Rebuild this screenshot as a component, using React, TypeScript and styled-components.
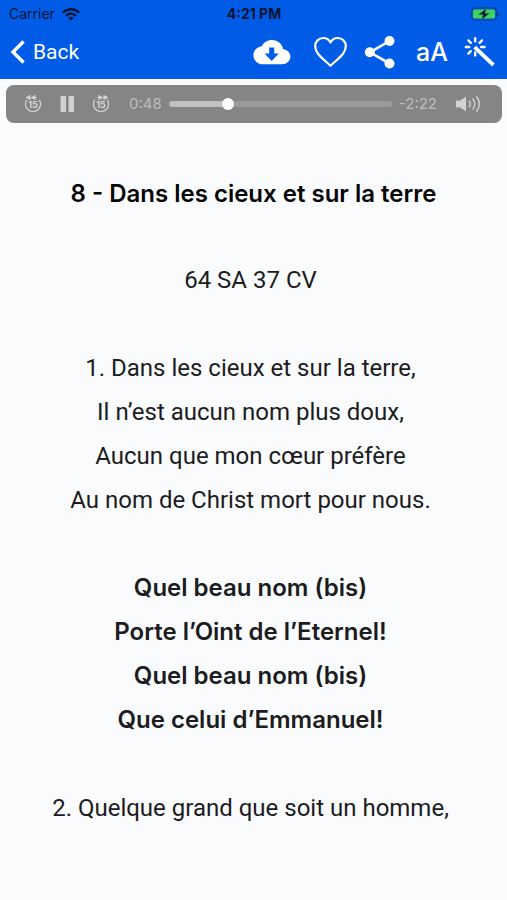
import React, { useState } from "react";
import styled, { createGlobalStyle } from "styled-components";

const GlobalStyle = createGlobalStyle`
  *, *::before, *::after { box-sizing: border-box; }
  body {
    margin: 0;
    background: #fafbfd;
    color: #1c1c1e;
    font-family: Inter, "Liberation Sans", sans-serif;
  }
`;

const Page = styled.div`
  display: flex;
  flex-direction: column;
  min-height: 100vh;
  overflow-x: hidden;
`;

const Header = styled.header`
  background: #005ce6;
`;

const StatusBar = styled.div`
  display: grid;
  grid-template-columns: 1fr auto 1fr;
  align-items: center;
  height: 28px;
  padding: 0 8px 0 9px;
  color: #041433;
  font-size: 14px;
  line-height: 16px;
`;

const Carrier = styled.div`
  display: flex;
  align-items: center;
  gap: 7px;
`;

const Clock = styled.time`
  font-weight: 700;
`;

const BatterySlot = styled.div`
  display: flex;
  justify-content: flex-end;
`;

const NavBar = styled.nav`
  display: flex;
  align-items: center;
  justify-content: space-between;
  height: 51px;
  padding: 0 11px 3px 10px;
`;

const PlainButton = styled.button`
  display: flex;
  align-items: center;
  flex: none;
  padding: 0;
  border: 0;
  background: none;
  color: inherit;
  font: inherit;
  cursor: pointer;
`;

const BackLink = styled.a`
  display: flex;
  align-items: center;
  gap: 8px;
  color: #fff;
  font-family: Roboto, Inter, sans-serif;
  font-size: 21px;
  line-height: 28px;
  text-decoration: none;
`;

const Actions = styled.div`
  display: flex;
  align-items: center;
  gap: 16px;
  color: #fff;
`;

const TextSizeButton = styled(PlainButton)`
  justify-content: flex-end;
  width: 34px;
  font-size: 25px;
  font-weight: 500;
  line-height: 32px;
`;

const Player = styled.section`
  display: flex;
  align-items: center;
  height: 38px;
  margin: 6px 5px 0 6px;
  padding: 0 20px 0 17px;
  border-radius: 8px;
  background: #858585;
  color: #d2d2d2;
`;

const Transport = styled.div`
  display: flex;
  align-items: center;
  gap: 14px;
  margin-right: 18px;
`;

const TimeLabel = styled.span`
  flex: none;
  color: #bcbcbc;
  font-size: 15px;
  line-height: 20px;
`;

const Seek = styled.input<{ $percent: number }>`
  flex: 1;
  min-width: 0;
  height: 12px;
  margin: 0 7px;
  appearance: none;
  background: transparent;

  &::-webkit-slider-runnable-track {
    height: 6px;
    border-radius: 3px;
    background: linear-gradient(
      to right,
      #c0c0c0 ${(p) => p.$percent}%,
      #9b9b9b ${(p) => p.$percent}%
    );
  }

  &::-webkit-slider-thumb {
    appearance: none;
    width: 12px;
    height: 12px;
    margin-top: -3px;
    border-radius: 50%;
    background: #fff;
  }
`;

const VolumeButton = styled(PlainButton)`
  margin-left: 18px;
`;

const Song = styled.main`
  padding: 49px 16px 0;
  font-size: 24px;
  line-height: 44px;
  text-align: center;
`;

const Title = styled.h1`
  margin: 0 0 42px;
  color: #050505;
  font-size: 24px;
  font-weight: 600;
  line-height: 44px;
`;

const Verse = styled.p<{ $chorus?: boolean }>`
  margin: 0 0 44px;
  padding-right: 6px;
  font-family: ${(p) => (p.$chorus ? "Inter" : "Roboto, Inter")}, sans-serif;
  font-weight: ${(p) => (p.$chorus ? 600 : 400)};
`;

const Line = styled.span`
  display: block;
`;

const WifiIcon = () => (
  <svg width="18" height="13" viewBox="0 0 18 13" fill="none" stroke="currentColor" strokeWidth="2.4" aria-hidden="true">
    <path d="M1 4.6C5.6.2 12.4.2 17 4.6" />
    <path d="M4 7.8c3-2.8 7-2.8 10 0" />
    <path d="M6.4 9.9c1.6-1.4 3.6-1.4 5.2 0L9 12.7Z" fill="currentColor" stroke="none" />
  </svg>
);

const BatteryIcon = () => (
  <svg width="28" height="14" viewBox="0 0 28 14" role="img" aria-label="Battery charging">
    <rect x=".6" y="1" width="24.8" height="12" rx="3.4" fill="none" stroke="#0b3688" strokeWidth="1.1" />
    <path d="M26.6 5v4c1.2-.3 1.4-1.1 1.4-2s-.2-1.700-1.400-2Z" fill="#0b3688" />
    <rect x="2" y="2.500" width="22" height="9" rx="2" fill="#3ed45e" />
    <path d="M15.400 1.200 7.500 7.700h4.500l-1.500 5.200 8-6.700H14Z" fill="#06152f" stroke="#2a9d62" strokeWidth=".6" />
  </svg>
);

const BackIcon = () => (
  <svg width="15" height="24" viewBox="0 0 15 24" fill="none" stroke="currentColor" strokeWidth="3.400" aria-hidden="true">
    <path d="M13.600 1.500 3 12l10.600 10.500" />
  </svg>
);

const CloudIcon = () => (
  <svg width="44" height="26" viewBox="0 0 44 26" fill="currentColor" aria-hidden="true">
    <path
      fillRule="evenodd"
      d="M31.200 10.200C30.200 4.600 25.400 1 20 1c-4.600 0-8.500 2.400-10.400 6.300C4.900 7.900 1.400 11.600 1.400 16.200c0 5 4 9 9 9H30c4.600 0 8.400-3.200 8.400-7.500 0-4-3.200-7.200-7.200-7.500ZM17.200 8.600h5v6h4.600L19.700 22l-7.100-7.400h4.600Z"
    />
  </svg>
);

const HeartIcon = () => (
  <svg width="36" height="32" viewBox="0 0 36 32" fill="none" stroke="currentColor" strokeWidth="2.200" strokeLinejoin="round" aria-hidden="true">
    <path d="M18.500 6.400C17 3.500 14.400 2 11.300 2 6.700 2 3.200 5.600 3.200 10.300c0 7.500 7.600 12 15.300 19.500 7.700-7.500 15.300-12 15.300-19.500C33.800 5.600 30.300 2 25.700 2c-3.100 0-5.700 1.500-7.200 4.400Z" />
  </svg>
);

const ShareIcon = () => (
  <svg width="34" height="34" viewBox="0 0 34 34" fill="currentColor" aria-hidden="true">
    <path d="M25.500 6 6 17.300l19.500 11.200" fill="none" stroke="currentColor" strokeWidth="2.600" />
    <circle cx="25.500" cy="6" r="5" />
    <circle cx="5.800" cy="17.300" r="5" />
    <circle cx="25.500" cy="28.500" r="5" />
  </svg>
);

const WandIcon = () => (
  <svg width="32" height="32" viewBox="0 0 32 32" fill="none" stroke="currentColor" aria-hidden="true">
    <path d="m10.600 11.200 18.800 17.800" strokeWidth="3.800" />
    <path
      strokeWidth="2.400"
      strokeLinecap="round"
      d="M11.200 2.200v3M11.200 16.400v3M1.800 11h3.400M17.200 11h3.400M4.400 4.400l2.400 2.400M18 4.400l-2.400 2.400M4.400 17.600l2.400-2.400"
    />
  </svg>
);

const SkipIcon = ({ forward = false }: { forward?: boolean }) => (
  <svg width="20" height="20" viewBox="0 0 20 20" aria-hidden="true">
    <g transform={forward ? "matrix(-1 0 0 1 20 0)" : undefined}>
      <path d="M3.700 5.800A7.600 7.600 0 1 0 16.300 5.800" fill="none" stroke="currentColor" strokeWidth="1.300" />
      <path d="M2.500 3.500 7.500.8v5.400ZM7.500 3.500l5-2.700v5.400Z" fill="currentColor" />
      <path d="M12 3.500h1.800" fill="none" stroke="currentColor" strokeWidth="1.200" />
    </g>
    <text x="10" y="13.500" textAnchor="middle" fontSize="9" fontWeight="700" fill="currentColor">
      15
    </text>
  </svg>
);

const PauseIcon = () => (
  <svg width="20" height="18" viewBox="0 0 20 18" fill="currentColor" aria-hidden="true">
    <rect x="3.500" y="1" width="5.500" height="16" rx="1" />
    <rect x="11.500" y="1" width="5.500" height="16" rx="1" />
  </svg>
);

const SpeakerIcon = () => (
  <svg width="27" height="18" viewBox="0 0 27 18" aria-hidden="true">
    <path d="M1 5.600h4.200L11 1.500v15l-5.800-4.100H1Z" fill="currentColor" />
    <path
      d="M14 5.600c1.500 2.100 1.500 4.700 0 6.800M17.500 3.500c2.700 3.300 2.700 7.700 0 11M21.300 1.200c4 4.700 4 10.900 0 15.600"
      fill="none"
      stroke="currentColor"
      strokeWidth="1.400"
    />
  </svg>
);

const verses = [
  { lines: ["64 SA 37 CV"] },
  {
    lines: [
      "1. Dans les cieux et sur la terre,",
      "Il n’est aucun nom plus doux,",
      "Aucun que mon cœur préfère",
      "Au nom de Christ mort pour nous.",
    ],
  },
  {
    chorus: true,
    lines: [
      "Quel beau nom (bis)",
      "Porte l’Oint de l’Eternel!",
      "Quel beau nom (bis)",
      "Que celui d’Emmanuel!",
    ],
  },
  { lines: ["2. Quelque grand que soit un homme,"] },
];

const DURATION = 190;

const formatTime = (seconds: number) =>
  `${Math.floor(seconds / 60)}:${String(seconds % 60).padStart(2, "0")}`;

export default function App() {
  const [position, setPosition] = useState(48);

  return (
    <Page>
      <GlobalStyle />
      <Header>
        <StatusBar>
          <Carrier>
            Carrier <WifiIcon />
          </Carrier>
          <Clock>4:21 PM</Clock>
          <BatterySlot>
            <BatteryIcon />
          </BatterySlot>
        </StatusBar>
        <NavBar>
          <BackLink href="#">
            <BackIcon />
            Back
          </BackLink>
          <Actions>
            <PlainButton type="button" aria-label="Download"><CloudIcon /></PlainButton>
            <PlainButton type="button" aria-label="Favorite"><HeartIcon /></PlainButton>
            <PlainButton type="button" aria-label="Share"><ShareIcon /></PlainButton>
            <TextSizeButton type="button">aA</TextSizeButton>
            <PlainButton type="button" aria-label="Theme"><WandIcon /></PlainButton>
          </Actions>
        </NavBar>
      </Header>
      <Player aria-label="Audio player">
        <Transport>
          <PlainButton type="button" aria-label="Back 15 seconds"><SkipIcon /></PlainButton>
          <PlainButton type="button" aria-label="Pause"><PauseIcon /></PlainButton>
          <PlainButton type="button" aria-label="Forward 15 seconds"><SkipIcon forward /></PlainButton>
        </Transport>
        <TimeLabel>{formatTime(position)}</TimeLabel>
        <Seek
          type="range"
          aria-label="Position"
          min={0}
          max={DURATION}
          value={position}
          $percent={(position / DURATION) * 100}
          onChange={(e) => setPosition(Number(e.target.value))}
        />
        <TimeLabel>-{formatTime(DURATION - position)}</TimeLabel>
        <VolumeButton type="button" aria-label="Volume"><SpeakerIcon /></VolumeButton>
      </Player>
      <Song>
        <Title>8 - Dans les cieux et sur la terre</Title>
        {verses.map((verse, i) => (
          <Verse key={i} $chorus={verse.chorus}>
            {verse.lines.map((line, j) => (
              <Line key={j}>{line}</Line>
            ))}
          </Verse>
        ))}
      </Song>
    </Page>
  );
}
